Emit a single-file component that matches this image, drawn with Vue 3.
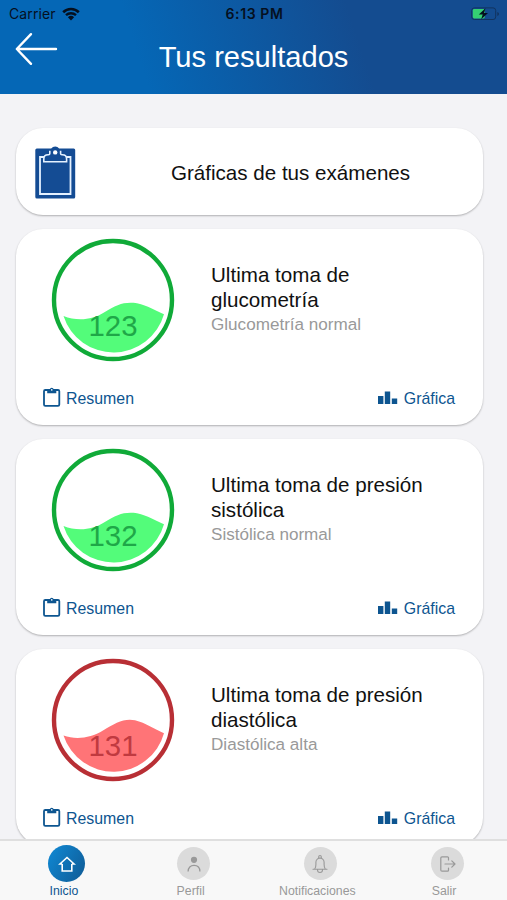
<template>
  <div class="pantalla">
    <header class="encabezado">
      <div class="barra-estado">
        <div class="operador">
          <span>Carrier</span>
          <svg width="18" height="14" viewBox="0 0 18 14">
            <path d="M1.2 5.2a11.2 11.2 0 0 1 15.6 0" fill="none" stroke="#05101f" stroke-width="2.6" />
            <path d="M4 8.2a7.2 7.2 0 0 1 10 0" fill="none" stroke="#05101f" stroke-width="2.4" />
            <path d="M5.9 10.3a4.5 4.5 0 0 1 6.2 0L9 13.4z" fill="#05101f" />
          </svg>
        </div>
        <span class="hora">6:13 PM</span>
        <svg class="bateria" width="30" height="14" viewBox="0 0 30 14">
          <rect x="1.7" y="0.9" width="24" height="11.6" rx="2.6" fill="none" stroke="#12335e" stroke-width="1" />
          <rect x="2.8" y="2" width="12" height="9.4" rx="1.4" fill="#35d073" />
          <path d="M27.3 5v4q1.7-.6 1.7-2t-1.7-2z" fill="#12335e" />
          <path d="M15.500 1.200 8.800 7.500h3.900L11.200 12.200 18 5.900h-4z" fill="#03101f" />
        </svg>
      </div>
      <div class="barra-titulo">
        <svg class="volver" width="44" height="34" viewBox="0 0 44 34">
          <path d="M41 17H2M16 2.2 1.8 17 16 31.8" fill="none" stroke="#fff" stroke-width="2.4" stroke-linecap="round" stroke-linejoin="round" />
        </svg>
        <h1>Tus resultados</h1>
      </div>
    </header>

    <main class="contenido">
      <section class="tarjeta tarjeta-graficas">
        <svg width="42" height="54" viewBox="0 0 42 54">
          <rect x="0.3" y="2.500" width="39.900" height="50" rx="1.500" fill="#144c94" />
          <path d="M9.500 11H5v37h30.500V11H31" fill="none" stroke="#e4f1ff" stroke-width="1.800" />
          <path d="M8.800 15.700v-2.800q0-4.200 4.200-4.200h1.600C14.800 3.600 17 .4 20.200.4s5.400 3.200 5.600 8.300h1.600q4.200 0 4.200 4.200v2.800z" fill="#144c94" />
          <path d="M14.800 4.800v2.600q0 1.300-1.300 1.300H13q-4.200 0-4.200 4.200v2.800h22.800v-2.800q0-4.200-4.200-4.200h-.5q-1.300 0-1.300-1.300V4.800" fill="none" stroke="#e4f1ff" stroke-width="1.600" />
          <circle cx="20.200" cy="6.400" r="2.200" fill="#fff" />
        </svg>
        <span>Gráficas de tus exámenes</span>
      </section>

      <section v-for="toma in tomas" :key="toma.titulo" class="tarjeta tarjeta-toma" :class="toma.estado">
        <div class="cuerpo">
          <svg class="medidor" width="124" height="124" viewBox="0 0 124 124">
            <circle class="aro" cx="62" cy="62" r="59" />
            <path v-if="toma.estado === 'normal'" class="ola" d="M12.500 78C25 83 41 82.500 53 74.500C66 66.500 73 63.500 86 65.200C97 67.500 104 72.500 113 76.200A52.500 52.500 0 0 1 12.500 78z" />
            <path v-else class="ola" d="M12.500 77.500C25 82 40 80 52 72.500C64 65 73 60 84 62.200C95 65 103 71 113 75.200A52.500 52.500 0 0 1 12.500 77.500z" />
            <text x="62" y="98">{{ toma.valor }}</text>
          </svg>
          <div class="detalle">
            <h2>{{ toma.titulo }}</h2>
            <p>{{ toma.descripcion }}</p>
          </div>
        </div>
        <div class="acciones">
          <button>
            <svg class="portapapeles" width="18" height="20" viewBox="0 0 18 20">
              <rect x="1" y="3" width="15.300" height="15.800" rx="1.300" fill="none" stroke="#0d5590" stroke-width="1.800" />
              <path d="M4.200 2.300h2.600a2 2 0 0 1 3.900 0h2.600v4H4.200z" fill="#0d5590" />
              <circle cx="8.750" cy="2.900" r="0.800" fill="#fff" />
            </svg>
            <span>Resumen</span>
          </button>
          <button>
            <svg class="barras" width="20" height="14" viewBox="0 0 20 14">
              <path d="M0 5h5.400v8H0zM6.800.5h5.400V13H6.800zM13.800 7.500h5.400V13h-5.400z" fill="#0d5590" />
            </svg>
            <span>Gráfica</span>
          </button>
        </div>
      </section>
    </main>

    <nav class="menu">
      <a class="activo">
        <span class="icono">
          <svg width="18" height="18" viewBox="0 0 18 18">
            <path d="M4.200 9v7h9.600V9M4.200 9H1.900L9 2.500 16.100 9h-2.300" fill="none" stroke="#fff" stroke-width="1.600" />
          </svg>
        </span>
        <span class="etiqueta">Inicio</span>
      </a>
      <a>
        <span class="icono">
          <svg width="18" height="18" viewBox="0 0 18 18">
            <circle cx="9" cy="4.800" r="3.100" fill="#999" />
            <path d="M3.100 16.600c0-4.200 2.500-6.200 5.900-6.200s5.900 2 5.900 6.200" fill="none" stroke="#999" stroke-width="1.300" />
          </svg>
        </span>
        <span class="etiqueta">Perfil</span>
      </a>
      <a>
        <span class="icono">
          <svg width="18" height="20" viewBox="0 0 18 20">
            <path d="M2 15.300h14M3.700 15q1.200-1.500 1.200-4.500V8.200a4.100 4.100 0 0 1 8.200 0v2.300q0 3 1.200 4.500M7.700 4V2.800a1.300 1.300 0 0 1 2.600 0V4M6.500 16a2.500 2.500 0 0 0 5 0" fill="none" stroke="#999" stroke-width="1.100" stroke-linecap="round" />
          </svg>
        </span>
        <span class="etiqueta">Notificaciones</span>
      </a>
      <a>
        <span class="icono">
          <svg width="18" height="18" viewBox="0 0 18 18">
            <path d="M10.500 5V2.800q0-1-1-1H4q-1.200 0-1.200 1.200v12q0 1.200 1.200 1.200h5.500q1 0 1-1V13M7 9h10M13.800 5.800 17 9l-3.200 3.200" fill="none" stroke="#999" stroke-width="1.200" stroke-linecap="round" stroke-linejoin="round" />
          </svg>
        </span>
        <span class="etiqueta">Salir</span>
      </a>
    </nav>
  </div>
</template>

<script setup>
// estado: 'normal' (verde) o 'alta' (rojo)
const tomas = [
  { valor: 123, titulo: 'Ultima toma de glucometría', descripcion: 'Glucometría normal', estado: 'normal' },
  { valor: 132, titulo: 'Ultima toma de presión sistólica', descripcion: 'Sistólica normal', estado: 'normal' },
  { valor: 131, titulo: 'Ultima toma de presión diastólica', descripcion: 'Diastólica alta', estado: 'alta' }
]
</script>

<style>
body {
  margin: 0;
  overflow: hidden;
}
</style>

<style scoped>
.pantalla {
  display: flex;
  flex-direction: column;
  width: 507px;
  height: 900px;
  overflow: hidden;
  background: #f3f3f6;
  font-family: 'Liberation Sans', Arial, sans-serif;
}
.encabezado {
  flex: none;
  height: 94px;
  background: linear-gradient(72deg, #0567b6 28%, #144c90 70%);
}
.barra-estado {
  display: grid;
  grid-template-columns: 1fr auto 1fr;
  align-items: center;
  height: 27px;
  padding: 0 7px 0 9px;
  font-family: Inter, sans-serif;
  font-size: 14px;
  color: #05101f;
}
.operador {
  display: flex;
  align-items: center;
  gap: 6px;
}
.operador span {
  letter-spacing: 0.1px;
}
.hora {
  font-weight: 600;
  letter-spacing: 0.6px;
}
.bateria {
  justify-self: end;
}
.barra-titulo {
  display: grid;
  grid-template-columns: 44px 1fr 44px;
  padding: 0 15px;
}
.volver {
  margin-top: 5px;
}
h1 {
  margin: 13px 0 0;
  font-size: 29.1px;
  font-weight: 400;
  line-height: 34px;
  text-align: center;
  color: #fff;
}
.contenido {
  flex: 1;
  min-height: 0;
  overflow: hidden;
  display: flex;
  flex-direction: column;
  gap: 14px;
  padding: 34px 24px 0 16px;
}
.tarjeta {
  flex: none;
  box-sizing: border-box;
  border-radius: 27px;
  background: #fff;
  box-shadow: 0 1px 2px rgba(0, 0, 0, 0.28);
}
.tarjeta-graficas {
  display: flex;
  align-items: center;
  height: 87px;
  padding: 2px 19px 0;
}
.tarjeta-graficas span {
  flex: 1;
  padding: 0 0 0 40px;
  text-align: center;
  font-size: 20.6px;
  color: #111;
}
.tarjeta-toma {
  display: flex;
  flex-direction: column;
  justify-content: space-between;
  height: 196px;
  padding: 9px 28px 15px 27px;
}
.cuerpo {
  display: flex;
  gap: 36px;
  padding-left: 8px;
}
.medidor {
  flex: none;
}
.aro {
  fill: none;
  stroke: #10aa38;
  stroke-width: 4.4;
}
.ola {
  fill: #53fc7a;
}
.medidor text {
  font-size: 29.4px;
  text-anchor: middle;
  fill: #1fa748;
}
.alta .aro {
  stroke: #b82f35;
}
.alta .ola {
  fill: #ff7477;
}
.alta .medidor text {
  fill: #c03a40;
}
.detalle {
  padding-top: 24px;
}
h2 {
  margin: 0;
  font-size: 20.6px;
  font-weight: 400;
  line-height: 25px;
  color: #111;
}
p {
  margin: 0;
  font-size: 17.1px;
  line-height: 25px;
  color: #999;
}
.acciones {
  display: flex;
  justify-content: space-between;
}
button {
  display: flex;
  align-items: center;
  gap: 5px;
  padding: 0;
  border: none;
  background: none;
  font-family: inherit;
  font-size: 15.9px;
  line-height: 22px;
  color: #0d5590;
  cursor: pointer;
}
.portapapeles {
  margin-bottom: 3px;
}
.barras {
  margin: 0 1px 1px 0;
}
.menu {
  flex: none;
  display: grid;
  grid-template-columns: repeat(4, 1fr);
  box-sizing: border-box;
  height: 61px;
  border-top: 2px solid #dfdfdf;
  background: #f8f8f8;
}
.menu a {
  display: flex;
  flex-direction: column;
  align-items: center;
  color: #999;
}
.icono {
  display: flex;
  align-items: center;
  justify-content: center;
  width: 33px;
  height: 33px;
  margin: 6px 0 2px 7px;
  border-radius: 50%;
  background: #dbdbdb;
}
.etiqueta {
  padding-left: 1px;
  font-size: 12.3px;
  line-height: 18px;
}
.activo .icono {
  width: 37px;
  height: 37px;
  margin: 4px 0 0 7px;
  background: linear-gradient(120deg, #0f8ad6, #105a94);
}
.menu .activo {
  color: #0d5590;
}
</style>
